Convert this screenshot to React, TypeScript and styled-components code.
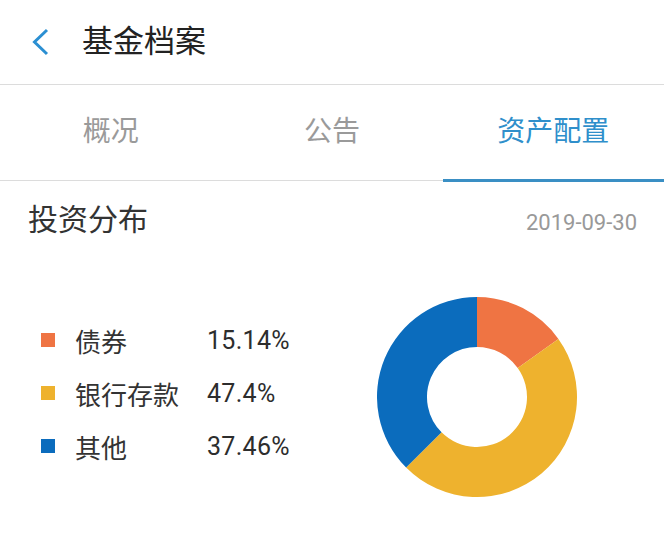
import React, { useState } from 'react';
import styled, { createGlobalStyle } from 'styled-components';

const GlobalStyle = createGlobalStyle`
  html, body {
    margin: 0;
    padding: 0;
    background: #fff;
  }
  body {
    font-family: Roboto, 'Noto Sans CJK SC', sans-serif;
    color: #333;
  }
`;

const StyledPage = styled.div`
  width: 664px;
  min-height: 552px;
  background: #fff;
  overflow: hidden;
`;

const StyledHeader = styled.div`
  display: flex;
  align-items: center;
  height: 84px;
  padding-left: 30px;
  border-bottom: 1px solid #dcdcdc;
`;

const StyledBack = styled.button`
  display: flex;
  align-items: center;
  padding: 0;
  margin: 0;
  background: none;
  border: none;
  cursor: pointer;
`;

const StyledTitle = styled.h1`
  margin: 0 0 0 32px;
  font-size: 31px;
  font-weight: 400;
  line-height: 40px;
  color: #222;
`;

const StyledTabs = styled.div`
  display: flex;
  height: 95px;
  border-bottom: 1px solid #dcdcdc;
`;

const StyledTab = styled.div<{ $active: boolean }>`
  position: relative;
  flex: 1;
  display: flex;
  align-items: center;
  justify-content: center;
  padding-bottom: 7px;
  font-size: 28px;
  color: ${(props) => (props.$active ? '#2f8fcb' : '#9a9a9a')};
  cursor: pointer;

  &:after {
    content: '';
    display: ${(props) => (props.$active ? 'block' : 'none')};
    position: absolute;
    left: 0;
    right: 0;
    bottom: -2px;
    height: 3px;
    background: #3a8fc4;
  }
`;

const StyledSectionHead = styled.div`
  display: flex;
  justify-content: space-between;
  align-items: flex-end;
  padding: 19px 27px 0 28px;
`;

const StyledSectionTitle = styled.h2`
  margin: 0;
  font-size: 30px;
  font-weight: 400;
  line-height: 40px;
  color: #333;
`;

const StyledDate = styled.span`
  font-size: 22px;
  line-height: 30px;
  color: #999;
  padding-bottom: 2px;
`;

const StyledChartBody = styled.div`
  display: flex;
  align-items: center;
  padding: 57px 0 0 41px;
`;

const StyledLegend = styled.ul`
  list-style: none;
  margin: 0 0 8px;
  padding: 0;
  width: 336px;
`;

const StyledLegendRow = styled.li`
  display: flex;
  align-items: center;
  height: 53px;
`;

const StyledSwatch = styled.span<{ $color: string }>`
  width: 14px;
  height: 14px;
  background: ${(props) => props.$color};
  margin-right: 20px;
  flex-shrink: 0;
`;

const StyledLabel = styled.span`
  width: 132px;
  font-size: 26px;
  color: #333;
`;

const StyledValue = styled.span`
  font-size: 25px;
  color: #2d2d2d;
  letter-spacing: 0.3px;
`;

const StyledDonut = styled.svg`
  width: 200px;
  height: 200px;
  flex-shrink: 0;
`;

const tabs = ['概况', '公告', '资产配置'];

const assets = [
  { name: '债券', value: 15.14, label: '15.14%', color: '#ef7443' },
  { name: '银行存款', value: 47.4, label: '47.4%', color: '#eeb22e' },
  { name: '其他', value: 37.46, label: '37.46%', color: '#0b6cbd' },
];

const arcPath = (start: number, end: number, r1: number, r2: number) => {
  const c = 100;
  const p = (a: number, r: number) => {
    const rad = (a - 90) * (Math.PI / 180);
    return `${c + r * Math.cos(rad)} ${c + r * Math.sin(rad)}`;
  };
  const large = end - start > 180 ? 1 : 0;
  return [
    `M ${p(start, r1)}`,
    `A ${r1} ${r1} 0 ${large} 1 ${p(end, r1)}`,
    `L ${p(end, r2)}`,
    `A ${r2} ${r2} 0 ${large} 0 ${p(start, r2)}`,
    'Z',
  ].join(' ');
};

const Donut = () => {
  const total = assets.reduce((s, a) => s + a.value, 0);
  let angle = 0;
  return (
    <StyledDonut viewBox='0 0 200 200'>
      {assets.map((a) => {
        const start = angle;
        angle += (a.value / total) * 360;
        return <path key={a.name} d={arcPath(start, angle, 100, 50)} fill={a.color} />;
      })}
    </StyledDonut>
  );
};

const App = () => {
  const [active, setActive] = useState(2);

  return (
    <StyledPage>
      <GlobalStyle />
      <StyledHeader>
        <StyledBack>
          <svg width='20' height='28' viewBox='0 0 20 28'>
            <path d='M17 2 L4.5 14 L17 26' fill='none' stroke='#2b8fd2' strokeWidth='3' />
          </svg>
        </StyledBack>
        <StyledTitle>基金档案</StyledTitle>
      </StyledHeader>
      <StyledTabs>
        {tabs.map((t, i) => (
          <StyledTab key={t} $active={i === active} onClick={() => setActive(i)}>
            {t}
          </StyledTab>
        ))}
      </StyledTabs>
      <StyledSectionHead>
        <StyledSectionTitle>投资分布</StyledSectionTitle>
        <StyledDate>2019-09-30</StyledDate>
      </StyledSectionHead>
      <StyledChartBody>
        <StyledLegend>
          {assets.map((a) => (
            <StyledLegendRow key={a.name}>
              <StyledSwatch $color={a.color} />
              <StyledLabel>{a.name}</StyledLabel>
              <StyledValue>{a.label}</StyledValue>
            </StyledLegendRow>
          ))}
        </StyledLegend>
        <Donut />
      </StyledChartBody>
    </StyledPage>
  );
};

export default App;
